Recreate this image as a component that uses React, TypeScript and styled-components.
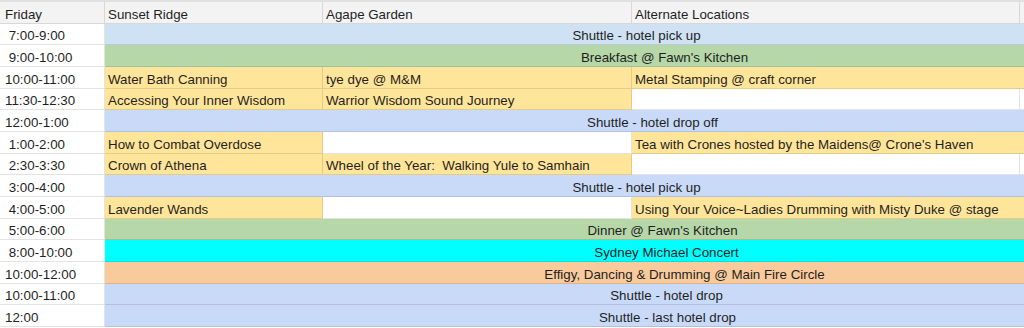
import { FC, Fragment } from 'react';
import { createGlobalStyle, styled } from 'styled-components';

const YELLOW = '#ffe599';
const PICKUP = '#cfe2f3';
const DROP = '#c9daf8';
const GREEN = '#b6d7a8';
const CYAN = '#00ffff';
const PEACH = '#f9cb9c';

// x centre of the merged block in the whole strip 105..1024
const MERGE_MID = 564.5;

interface ICell {
	text?: string;
	bg?: string;
	span?: number;
	center?: number;
}

interface IRow {
	time: string;
	cells: ICell[];
}

const rows: IRow[] = [
	{ time: ' 7:00-9:00', cells: [{ text: 'Shuttle - hotel pick up', bg: PICKUP, span: 4, center: 637 }] },
	{ time: ' 9:00-10:00', cells: [{ text: "Breakfast @ Fawn's Kitchen", bg: GREEN, span: 4, center: 665 }] },
	{
		time: '10:00-11:00',
		cells: [
			{ text: 'Water Bath Canning', bg: YELLOW },
			{ text: 'tye dye @ M&M', bg: YELLOW },
			{ text: 'Metal Stamping @ craft corner', bg: YELLOW, span: 2 },
		],
	},
	{
		time: '11:30-12:30',
		cells: [
			{ text: 'Accessing Your Inner Wisdom', bg: YELLOW },
			{ text: 'Warrior Wisdom Sound Journey', bg: YELLOW },
			{},
			{},
		],
	},
	{ time: '12:00-1:00', cells: [{ text: 'Shuttle - hotel drop off', bg: DROP, span: 4, center: 653 }] },
	{
		time: ' 1:00-2:00',
		cells: [
			{ text: 'How to Combat Overdose', bg: YELLOW },
			{},
			{ text: "Tea with Crones hosted by the Maidens@ Crone's Haven", bg: YELLOW, span: 2 },
		],
	},
	{
		time: ' 2:30-3:30',
		cells: [
			{ text: 'Crown of Athena', bg: YELLOW },
			{ text: 'Wheel of the Year:  Walking Yule to Samhain', bg: YELLOW },
			{},
			{},
		],
	},
	{ time: ' 3:00-4:00', cells: [{ text: 'Shuttle - hotel pick up', bg: DROP, span: 4, center: 637 }] },
	{
		time: ' 4:00-5:00',
		cells: [
			{ text: 'Lavender Wands', bg: YELLOW },
			{},
			{ text: 'Using Your Voice~Ladies Drumming with Misty Duke @ stage', bg: YELLOW, span: 2 },
		],
	},
	{ time: ' 5:00-6:00', cells: [{ text: "Dinner @ Fawn's Kitchen", bg: GREEN, span: 4, center: 663 }] },
	{ time: ' 8:00-10:00', cells: [{ text: 'Sydney Michael Concert', bg: CYAN, span: 4, center: 667 }] },
	{
		time: '10:00-12:00',
		cells: [{ text: 'Effigy, Dancing & Drumming @ Main Fire Circle', bg: PEACH, span: 4, center: 685 }],
	},
	{ time: '10:00-11:00', cells: [{ text: 'Shuttle - hotel drop', bg: DROP, span: 4, center: 667 }] },
	{ time: '12:00', cells: [{ text: 'Shuttle - last hotel drop', bg: DROP, span: 4, center: 668 }] },
];

const App: FC = () => {
	return (
		<>
			<GlobalStyle />
			<Sheet>
				<Cell $head $first>
					Friday
				</Cell>
				<Cell $head>Sunset Ridge</Cell>
				<Cell $head>Agape Garden</Cell>
				<Cell $head>Alternate Locations</Cell>
				<Cell $head />

				{rows.map(({ time, cells }, i) => (
					<Fragment key={i}>
						<Cell $first>{time}</Cell>
						{cells.map(({ text, bg, span, center }, j) => (
							<Cell
								key={j}
								$bg={bg}
								$span={span}
								$shift={center !== undefined ? 2 * (center - MERGE_MID) : undefined}
							>
								{text}
							</Cell>
						))}
					</Fragment>
				))}
			</Sheet>
		</>
	);
};

export default App;

const GlobalStyle = createGlobalStyle`
	html, body {
		margin: 0;
		padding: 0;
		background: #fff;
		overflow: hidden;
	}

	body {
		font-family: 'Liberation Sans', Arial, sans-serif;
		font-size: 13.33px;
		color: #1f1f1f;
	}
`;

const Sheet = styled.div`
	display: grid;
	grid-template-columns: 105px 218px 309px 388px 1fr;
	grid-auto-rows: 21.67px;
	width: 1024px;
	border-top: 2px solid #e1e1e1;
`;

interface CellProps {
	$bg?: string;
	$span?: number;
	$shift?: number;
	$head?: boolean;
	$first?: boolean;
}

const Cell = styled.div<CellProps>`
	display: flex;
	align-items: flex-end;
	justify-content: ${({ $shift }) => ($shift !== undefined ? 'center' : 'flex-start')};
	grid-column: span ${({ $span }) => $span ?? 1};
	box-sizing: border-box;
	min-width: 0;
	padding: 0 3px 1px ${({ $shift, $first }) => ($shift !== undefined ? `${$shift}px` : $first ? '5px' : '3px')};
	background-color: ${({ $bg, $head }) => $bg ?? ($head ? '#f3f3f3' : '#fff')};
	border-right: 1px solid rgba(0, 0, 0, 0.11);
	border-bottom: 1px solid rgba(0, 0, 0, 0.11);
	white-space: pre;
	overflow: hidden;
	line-height: normal;
`;
